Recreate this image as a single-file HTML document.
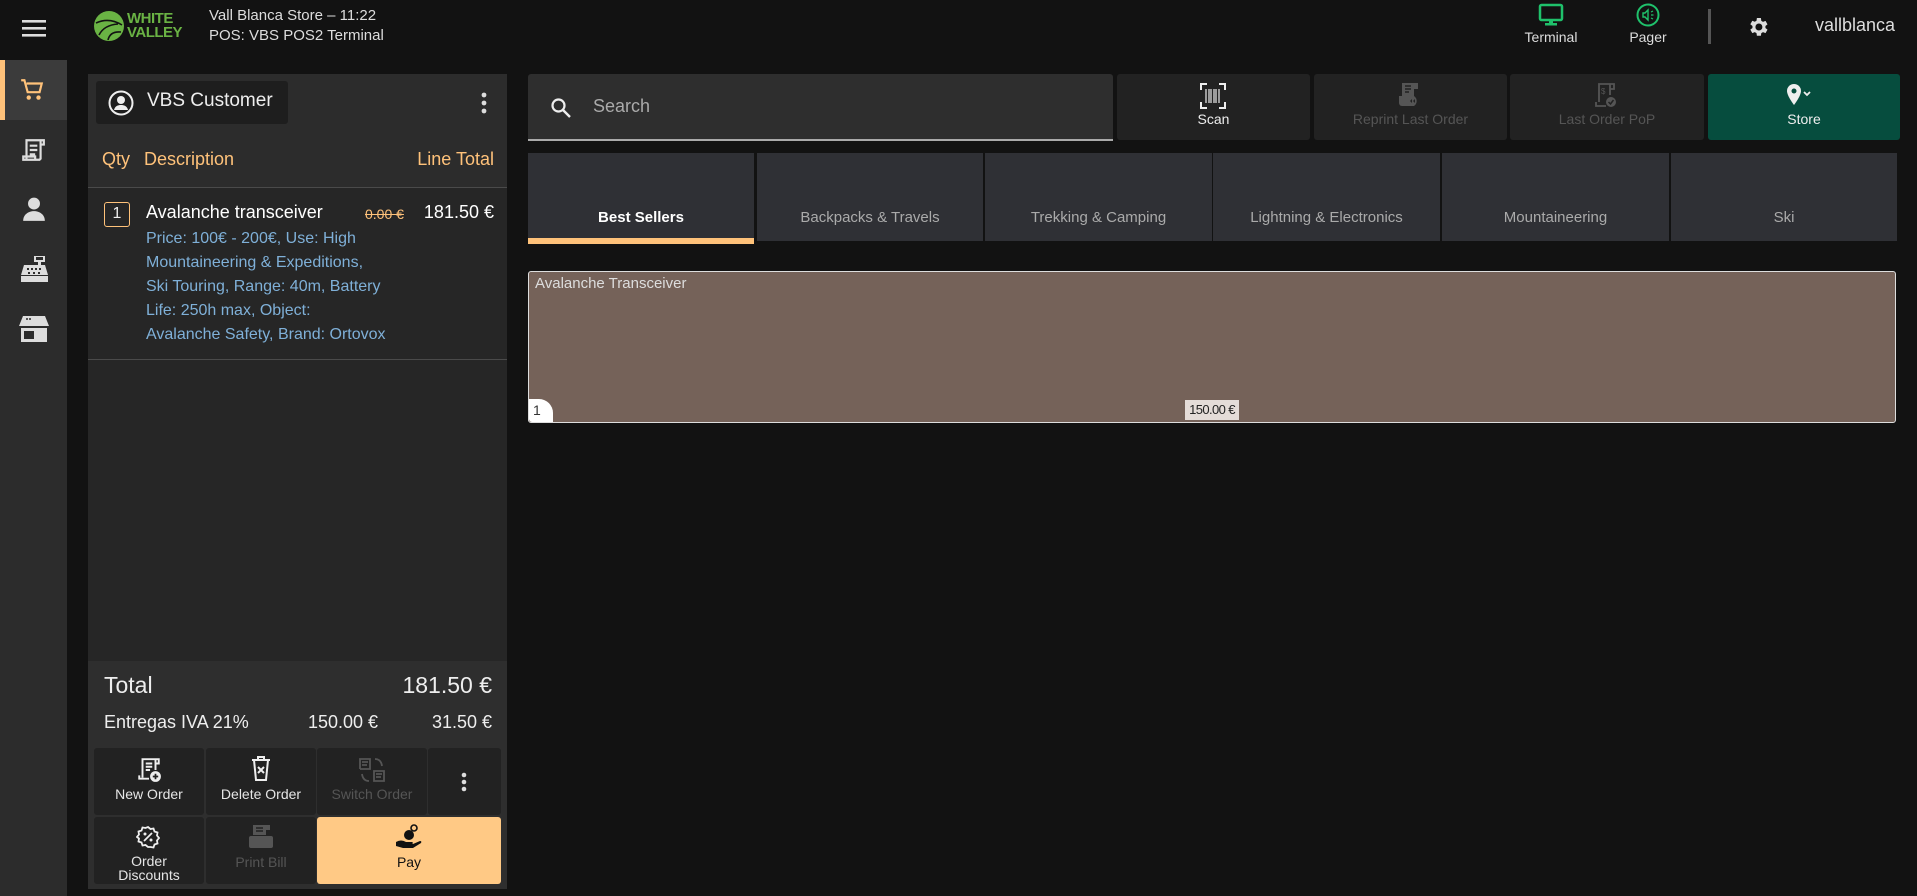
<!DOCTYPE html>
<html><head><meta charset="utf-8"><style>
*{box-sizing:border-box;margin:0;padding:0}
body{width:1917px;height:896px;background:#121212;font-family:"Liberation Sans",sans-serif;color:#e6e6e6;position:relative;overflow:hidden}
.a{position:absolute}
.btn{position:absolute;background:#222;border-radius:3px;text-align:center;font-size:14px}
.tab{position:absolute;top:153px;height:88px;background:#2f3035;color:#aaa;font-size:15px;text-align:center;line-height:28px;padding-top:51px}
.desc{color:#7fb0d8;font-size:16px;line-height:24px}
</style></head><body>
<!-- top bar -->
<svg class="a" style="left:20px;left:22px;top:20px" width="24" height="18"><rect y="0" width="24" height="2.6" fill="#ddd"/><rect y="7" width="24" height="2.6" fill="#ddd"/><rect y="14" width="24" height="2.6" fill="#ddd"/></svg>
<svg class="a" style="left:94px;top:11px" width="32" height="32"><circle cx="15" cy="15" r="15" fill="#6ab344"/><path d="M2 12 Q15 6 28 14 M5 24 Q10 14 24 13 M14 29 Q16 20 27 21" stroke="#121212" stroke-width="1.6" fill="none"/></svg>
<div class="a" style="left:127px;top:12px;color:#6ab344;font-weight:bold;font-size:15px;line-height:14px;letter-spacing:-0.5px">WHITE<br>VALLEY</div>
<div class="a" style="left:209px;top:6px;font-size:15px;line-height:20px;color:#ddd">Vall Blanca Store – 11:22<br>POS: VBS POS2 Terminal</div>
<svg class="a" style="left:1538px;top:3px" width="26" height="24"><rect x="2" y="2" width="22" height="15" rx="1.5" fill="none" stroke="#1fc16b" stroke-width="2.5"/><rect x="11" y="17" width="4" height="4" fill="#1fc16b"/><rect x="7" y="20" width="12" height="2.5" fill="#1fc16b"/></svg>
<div class="a" style="left:1520px;top:29px;width:62px;text-align:center;font-size:14px;color:#ddd">Terminal</div>
<svg class="a" style="left:1636px;top:3px" width="24" height="24"><circle cx="12" cy="12" r="10.5" fill="none" stroke="#1fc16b" stroke-width="2"/><path d="M7 10h2l3-3v10l-3-3H7z" fill="none" stroke="#1fc16b" stroke-width="1.4"/><path d="M15 9l2-1M15 12h2.5M15 15l2 1" stroke="#1fc16b" stroke-width="1.2"/></svg>
<div class="a" style="left:1620px;top:29px;width:56px;text-align:center;font-size:14px;color:#ddd">Pager</div>
<div class="a" style="left:1708px;top:9px;width:3px;height:35px;background:#555"></div>
<svg class="a" style="left:1746px;top:15px" width="24" height="24" viewBox="0 0 24 24"><path fill="#ddd" d="M19.4 13a7.6 7.6 0 000-2l2.1-1.6-2-3.5-2.5 1a7.4 7.4 0 00-1.7-1L14.9 3h-4l-.4 2.7a7.4 7.4 0 00-1.7 1l-2.5-1-2 3.5L6.5 11a7.6 7.6 0 000 2l-2.2 1.6 2 3.5 2.5-1a7.4 7.4 0 001.7 1l.4 2.7h4l.4-2.7a7.4 7.4 0 001.7-1l2.5 1 2-3.5zM12.9 15.5a3.5 3.5 0 110-7 3.5 3.5 0 010 7z"/></svg>
<div class="a" style="left:1815px;top:15px;font-size:18px;color:#ddd">vallblanca</div>
<!-- sidebar -->
<div class="a" style="left:0;top:60px;width:67px;height:836px;background:#2c2c2c"></div>
<div class="a" style="left:0;top:60px;width:67px;height:60px;background:#3b3b3b;border-left:5px solid #ffc27a"></div>
<svg class="a" style="left:19px;top:77px" width="26" height="26" viewBox="0 0 24 24"><path fill="none" stroke="#ffc27a" stroke-width="2" d="M2 3h3l3 11h11l2-8H7"/><circle cx="9" cy="19" r="2" fill="#ffc27a"/><circle cx="18" cy="19" r="2" fill="#ffc27a"/></svg>
<svg class="a" style="left:20px;top:137px" width="26" height="26" viewBox="0 0 24 24"><path fill="none" stroke="#ddd" stroke-width="2" d="M6 20V3h13v17l-1 1H3v-3h11v3M19 3h3v4h-3M9 8h7M9 12h7M9 16h5"/></svg>
<svg class="a" style="left:21px;top:196px" width="26" height="26" viewBox="0 0 24 24"><circle cx="12" cy="7" r="5.5" fill="#ddd"/><path d="M2 23c0-6 5-9 10-9s10 3 10 9z" fill="#ddd"/></svg>
<svg class="a" style="left:20px;top:256px" width="29" height="28" viewBox="0 0 29 28"><rect x="15" y="0" width="9" height="5" fill="none" stroke="#ddd" stroke-width="2"/><rect x="18" y="5" width="3" height="4" fill="#ddd"/><path d="M4 9h21l3 10H1z" fill="#ddd"/><rect x="1" y="20" width="27" height="6" fill="#ddd"/><g fill="#2c2c2c"><rect x="7" y="12" width="2" height="2"/><rect x="11" y="12" width="2" height="2"/><rect x="15" y="12" width="2" height="2"/><rect x="19" y="12" width="2" height="2"/><rect x="8" y="16" width="2" height="2"/><rect x="13" y="16" width="2" height="2"/><rect x="18" y="16" width="2" height="2"/></g></svg>
<svg class="a" style="left:19px;top:315px" width="30" height="28" viewBox="0 0 30 28"><path d="M4 1h22l4 10H0z" fill="#ddd"/><rect x="2" y="13" width="26" height="14" fill="#ddd"/><rect x="5" y="16" width="10" height="8" fill="#2c2c2c"/><circle cx="8" cy="4" r="1" fill="#2c2c2c"/><circle cx="11" cy="4" r="1" fill="#2c2c2c"/></svg>
<!-- left panel -->
<div class="a" style="left:88px;top:74px;width:419px;height:815px;background:#262626"></div>
<div class="a" style="left:88px;top:74px;width:419px;height:58px;background:#2c2c2c"></div>
<div class="a" style="left:96px;top:81px;width:192px;height:43px;background:#1e1e1e;border-radius:3px"></div>
<svg class="a" style="left:108px;top:90px" width="26" height="26" viewBox="0 0 26 26"><circle cx="13" cy="13" r="11.5" fill="none" stroke="#eee" stroke-width="2"/><circle cx="13" cy="10" r="4" fill="#eee"/><path d="M6 20c1-4 4-5 7-5s6 1 7 5z" fill="#eee"/></svg>
<div class="a" style="left:147px;top:90px;font-size:19px;color:#eee">VBS Customer</div>
<svg class="a" style="left:481px;top:92px" width="6" height="22"><circle cx="3" cy="3" r="2.4" fill="#ddd"/><circle cx="3" cy="11" r="2.4" fill="#ddd"/><circle cx="3" cy="19" r="2.4" fill="#ddd"/></svg>
<div class="a" style="left:88px;top:132px;width:419px;height:56px;background:#2c2c2c;border-bottom:1px solid #4a4a4a"></div>
<div class="a" style="left:102px;top:149px;font-size:18px;color:#ffc27a">Qty</div>
<div class="a" style="left:144px;top:149px;font-size:18px;color:#ffc27a">Description</div>
<div class="a" style="right:1423px;top:149px;font-size:18px;color:#ffc27a">Line Total</div>
<div class="a" style="left:88px;top:189px;width:419px;height:171px;background:#262626;border-bottom:1px solid #4a4a4a"></div>
<div class="a" style="left:104px;top:202px;width:26px;height:25px;border:1.5px solid #ffc27a;border-radius:3px;text-align:center;font-size:16px;line-height:22px;color:#eee">1</div>
<div class="a" style="left:146px;top:202px;font-size:18px;color:#fff">Avalanche transceiver</div>
<div class="a" style="left:365px;top:206px;font-size:14px;color:#ffc27a;text-decoration:line-through">0.00 €</div>
<div class="a" style="right:1423px;top:202px;font-size:18px;color:#fff">181.50 €</div>
<div class="a desc" style="left:146px;top:227px;width:350px">Price: 100€ - 200€, Use: High<br>Mountaineering &amp; Expeditions,<br>Ski Touring, Range: 40m, Battery<br>Life: 250h max, Object:<br>Avalanche Safety, Brand: Ortovox</div>
<!-- totals -->
<div class="a" style="left:88px;top:661px;width:419px;height:228px;background:#2e2e2e"></div>
<div class="a" style="left:104px;top:672px;font-size:23px;color:#eee">Total</div>
<div class="a" style="right:1425px;top:672px;font-size:23px;color:#eee">181.50 €</div>
<div class="a" style="left:104px;top:712px;font-size:18px;color:#eee">Entregas IVA 21%</div>
<div class="a" style="left:308px;top:712px;font-size:18px;color:#eee">150.00 €</div>
<div class="a" style="right:1425px;top:712px;font-size:18px;color:#eee">31.50 €</div>
<div class="btn" style="left:94px;top:748px;width:110px;height:67px;padding-top:38px">New Order</div>
<svg class="a" style="left:136px;top:757px" width="26" height="26" viewBox="0 0 24 24"><path fill="none" stroke="#eee" stroke-width="1.8" d="M6 19V2h12v10M18 2h3v4h-3M9 6h6M9 9h6M9 12h4M3 17v3h9"/><circle cx="18" cy="18" r="5" fill="#eee"/><path d="M18 15.5v5M15.5 18h5" stroke="#222" stroke-width="1.6"/></svg>
<div class="btn" style="left:206px;top:748px;width:110px;height:67px;padding-top:38px">Delete Order</div>
<svg class="a" style="left:250px;top:756px" width="22" height="26" viewBox="0 0 22 26"><path d="M2 4h18M8 4V1h6v3M4 4l2 20h10l2-20" fill="none" stroke="#eee" stroke-width="2"/><path d="M8 11l6 6M14 11l-6 6" stroke="#eee" stroke-width="2"/></svg>
<div class="btn" style="left:317px;top:748px;width:110px;height:67px;padding-top:38px;color:#555">Switch Order</div>
<svg class="a" style="left:357px;top:757px" width="30" height="26" viewBox="0 0 30 26"><path fill="none" stroke="#555" stroke-width="1.8" d="M3 12V2h10v10H3M5 5h6M5 8h5M17 14h10v10H17zM19 17h6M19 20h5M18 2q6 0 7 7M12 24q-6 0-7-7"/></svg>
<div class="btn" style="left:428px;top:748px;width:73px;height:67px"></div>
<svg class="a" style="left:461px;top:772px" width="6" height="22"><circle cx="3" cy="3" r="2.3" fill="#ddd"/><circle cx="3" cy="10" r="2.3" fill="#ddd"/><circle cx="3" cy="17" r="2.3" fill="#ddd"/></svg>
<div class="btn" style="left:94px;top:817px;width:110px;height:67px;padding-top:37px;line-height:14px">Order<br>Discounts</div>
<svg class="a" style="left:136px;top:825px" width="24" height="24" viewBox="0 0 24 24"><path fill="none" stroke="#eee" stroke-width="1.8" d="M12 2l2.5 2 3-.5 1 3 3 1-.5 3 2 2.5-2 2.5.5 3-3 1-1 3-3-.5L12 22l-2.5-2-3 .5-1-3-3-1 .5-3L1 12l2-2.5-.5-3 3-1 1-3 3 .5z"/><path d="M8 16L16 8" stroke="#eee" stroke-width="1.8"/><circle cx="9" cy="9" r="1.5" fill="#eee"/><circle cx="15" cy="15" r="1.5" fill="#eee"/></svg>
<div class="btn" style="left:206px;top:817px;width:110px;height:67px;padding-top:37px;color:#555">Print Bill</div>
<svg class="a" style="left:248px;top:824px" width="26" height="26" viewBox="0 0 26 26"><path d="M5 1h13v10H5z M18 1h4v5h-4z" fill="#555"/><rect x="1" y="12" width="24" height="12" rx="2" fill="#555"/><path d="M8 4h7M8 7h7" stroke="#222" stroke-width="1.5"/></svg>
<div class="btn" style="left:317px;top:817px;width:184px;height:67px;background:#ffc985;color:#111;padding-top:37px">Pay</div>
<svg class="a" style="left:395px;top:824px" width="28" height="26" viewBox="0 0 28 26"><circle cx="14" cy="11" r="5" fill="#111"/><circle cx="19" cy="4" r="3" fill="none" stroke="#111" stroke-width="1.6"/><path d="M1 18q5-3 10 0h6q2 1 0 2h-6 7l7-3q2 0 1 2l-8 5H8l-7-2z" fill="#111"/></svg>
<!-- search & actions -->
<div class="a" style="left:528px;top:74px;width:585px;height:67px;background:#2e2e2e;border-bottom:2px solid #aaa;border-radius:3px 3px 0 0"></div>
<svg class="a" style="left:550px;top:97px" width="22" height="22" viewBox="0 0 22 22"><circle cx="8.5" cy="8.5" r="6" fill="none" stroke="#eee" stroke-width="2.2"/><path d="M13 13l7 7" stroke="#eee" stroke-width="2.4"/></svg>
<div class="a" style="left:593px;top:96px;font-size:18px;color:#aaa">Search</div>
<div class="btn" style="left:1117px;top:74px;width:193px;height:66px;padding-top:37px;color:#eee">Scan</div>
<svg class="a" style="left:1200px;top:83px" width="26" height="26" viewBox="0 0 26 26"><path fill="none" stroke="#eee" stroke-width="2" d="M1 7V1h6M19 1h6v6M25 19v6h-6M7 25H1v-6"/><path d="M6 6v14M9 6v14M11 6v14M14 6v14M16 6v14M19 6v14" stroke="#eee" stroke-width="1.2"/></svg>
<div class="btn" style="left:1314px;top:74px;width:193px;height:66px;padding-top:37px;color:#555">Reprint Last Order</div>
<svg class="a" style="left:1398px;top:82px" width="24" height="26" viewBox="0 0 24 26"><path d="M4 1h12v14H4zM16 1h4v6h-4z" fill="#555"/><path d="M1 14h15a6 6 0 010 10H4a3 3 0 01-3-3z" fill="#555"/><path d="M7 4h6M7 7h6M7 10h4" stroke="#222" stroke-width="1.5"/><path d="M12 19l2-2v4zM15 19l2-2v4z" fill="#222"/></svg>
<div class="btn" style="left:1510px;top:74px;width:194px;height:66px;padding-top:37px;color:#555">Last Order PoP</div>
<svg class="a" style="left:1594px;top:82px" width="24" height="26" viewBox="0 0 24 26"><path fill="none" stroke="#555" stroke-width="1.8" d="M5 20V2h11v11M16 2h4v5h-4M2 20v4h10"/><text x="7" y="12" font-size="8" fill="#555" font-family="Liberation Sans">$</text><circle cx="17" cy="20" r="5" fill="#555"/><path d="M14.5 20l2 2 3-4" stroke="#222" stroke-width="1.5" fill="none"/></svg>
<div class="btn" style="left:1708px;top:74px;width:192px;height:66px;padding-top:37px;background:#064d3e;color:#eee">Store</div>
<svg class="a" style="left:1786px;top:84px" width="30" height="24" viewBox="0 0 30 24"><path d="M8 0a7 7 0 017 7c0 5-7 14-7 14S1 12 1 7a7 7 0 017-7z" fill="#eee"/><circle cx="8" cy="7" r="2.5" fill="#064d3e"/><path d="M18 8l3 3 3-3" stroke="#eee" stroke-width="1.8" fill="none"/></svg>
<!-- tabs -->
<div class="tab" style="left:528px;width:226px;color:#fff;font-weight:bold">Best Sellers</div>
<div class="a" style="left:528px;top:238px;width:226px;height:6px;background:#ffc27a"></div>
<div class="tab" style="left:757px;width:226px">Backpacks &amp; Travels</div>
<div class="tab" style="left:985px;width:227px">Trekking &amp; Camping</div>
<div class="tab" style="left:1213px;width:227px">Lightning &amp; Electronics</div>
<div class="tab" style="left:1442px;width:227px">Mountaineering</div>
<div class="tab" style="left:1671px;width:226px">Ski</div>
<!-- product card -->
<div class="a" style="left:528px;top:271px;width:1368px;height:152px;background:#756259;border:1px solid #ddd;border-radius:3px"></div>
<div class="a" style="left:535px;top:275px;font-size:15px;color:#ddd">Avalanche Transceiver</div>
<div class="a" style="left:529px;top:399px;width:24px;height:23px;background:#fff;border-radius:0 14px 0 3px;color:#333;font-size:14px;padding:3px 0 0 4px">1</div>
<div class="a" style="left:1185px;top:400px;width:54px;height:20px;background:#e4dcd8;color:#222;font-size:13px;text-align:center;line-height:20px;letter-spacing:-0.6px">150.00 €</div>
</body></html>
